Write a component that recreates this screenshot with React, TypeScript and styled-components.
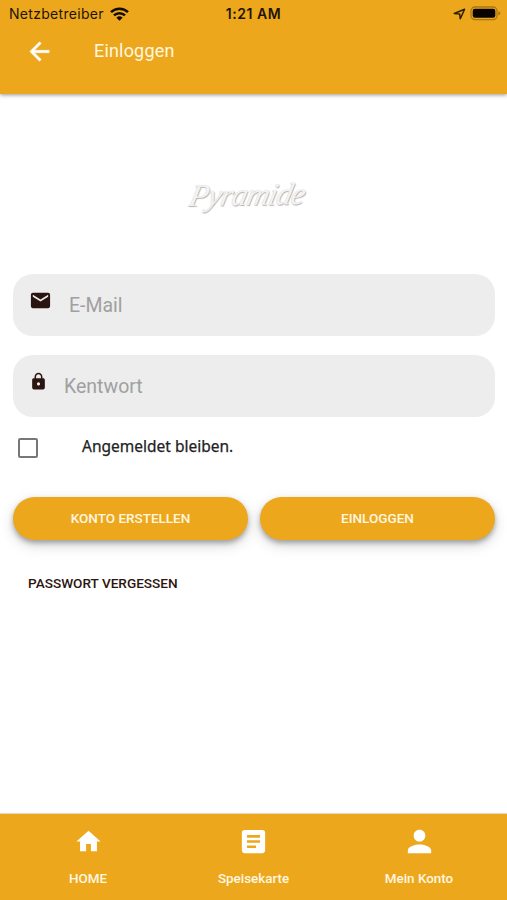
import React from "react";
import styled, { createGlobalStyle } from "styled-components";

const AMBER = "#eda71c";
const BROWN = "#2b1510";

const GlobalStyle = createGlobalStyle`
  *, *::before, *::after { box-sizing: border-box; }
  body { margin: 0; background: #fff; font-family: Roboto, sans-serif; }
  button, input { font: inherit; border: 0; margin: 0; padding: 0; }
`;

const Screen = styled.div`
  display: flex;
  flex-direction: column;
  height: 900px;
  overflow: hidden;
  background: #fff;
`;

const Header = styled.header`
  height: 94px;
  flex: none;
  background: ${AMBER};
  box-shadow: 0 1px 4px rgba(0, 0, 0, 0.42);
`;

const StatusBar = styled.div`
  display: grid;
  grid-template-columns: 1fr auto 1fr;
  align-items: center;
  height: 27px;
  padding: 0 6px 0 9px;
  font-family: Inter, sans-serif;
  font-size: 14px;
  color: #1d1503;
`;

const Carrier = styled.div`
  display: flex;
  align-items: center;
  gap: 6px;
  letter-spacing: 0.3px;
`;

const Clock = styled.div`
  margin-right: 3px;
  font-weight: 600;
  font-size: 14px;
  letter-spacing: 0.55px;
`;

const Indicators = styled.div`
  display: flex;
  align-items: center;
  justify-content: flex-end;
  gap: 4px;
`;

const TitleBar = styled.div`
  display: flex;
  align-items: center;
  height: 48px;
  padding-left: 25px;
`;

const IconButton = styled.button`
  display: flex;
  width: 29px;
  background: none;
  color: #fff;

  path { stroke: currentColor; stroke-width: 0.4; }
`;

const Title = styled.h1`
  margin: -2px 0 0 40px;
  font-size: 18px;
  font-weight: 400;
  letter-spacing: 0.18px;
  color: #fff7e0;
`;

const Content = styled.main`
  flex: 1;
  padding: 0 12px 0 13px;
`;

const Logo = styled.div`
  height: 180px;
  padding-top: 81px;
  text-align: center;
  font-family: "Liberation Serif", serif;
  font-style: italic;
  font-size: 31px;
  line-height: 40px;
  letter-spacing: -0.7px;
  color: #f3f3f3;
  text-shadow: 1px 1px 1px #b0b0b0, 0 0 1px #d0d0d0;

  span {
    display: inline-block;
    transform: translateX(-7px) rotate(-1deg) skewX(-14deg);
  }
`;

const Field = styled.label<{ $gap: number }>`
  display: flex;
  align-items: center;
  gap: ${(p) => p.$gap}px;
  height: 62px;
  margin-bottom: 19px;
  padding-left: 16px;
  border-radius: 20px;
  background: #ededed;
  color: ${BROWN};

  svg { flex: none; margin-top: -9px; }
`;

const Input = styled.input`
  flex: 1;
  min-width: 0;
  background: none;
  outline: 0;
  font-size: 19.5px;
  &::placeholder { color: #a0a0a0; opacity: 1; }
`;

const Remember = styled.label`
  display: flex;
  align-items: center;
  height: 24px;
  margin-top: 1px;
  padding-left: 5px;
  font-family: "Noto Sans", sans-serif;
  font-size: 15.5px;
  font-weight: 400;
  color: #222;
  -webkit-text-stroke: 0.25px #222;
  margin-bottom: 37px;

  span { margin: -5px 0 0 44px; }
`;

const Checkbox = styled.input`
  appearance: none;
  width: 20px;
  height: 20px;
  border: 2px solid #777;
  border-radius: 2px;
`;

const Actions = styled.div`
  display: grid;
  grid-template-columns: 1fr 1fr;
  gap: 12px;
`;

const PillButton = styled.button`
  height: 43px;
  padding-bottom: 2px;
  border-radius: 22px;
  background: ${AMBER};
  color: #fff7e0;
  font-size: 13.5px;
  font-weight: 500;
  box-shadow: 0 3px 5px rgba(0, 0, 0, 0.28), 0 5px 14px rgba(0, 0, 0, 0.17);
`;

const TextButton = styled.button`
  margin: 34px 0 0 15px;
  background: none;
  font-size: 13.6px;
  line-height: 18px;
  font-weight: 500;
  color: ${BROWN};
`;

const TabBar = styled.nav`
  display: grid;
  grid-template-columns: repeat(3, 165.5px);
  justify-content: center;
  height: 86px;
  flex: none;
  background: ${AMBER};
  box-shadow: 0 -1px 1px rgba(160, 130, 70, 0.3);
`;

const Tab = styled.a`
  display: flex;
  flex-direction: column;
  align-items: center;
  padding-top: 9px;
  color: #fff;
`;

const TabIcon = styled.span`
  display: flex;
  align-items: center;
  justify-content: center;
  height: 36px;
`;

const TabLabel = styled.span`
  margin-top: 10px;
  font-size: 13.4px;
  line-height: 19px;
  font-weight: 500;
  color: #fff7e0;
`;

const paths = {
  back: "M20 11H7.83l5.59-5.59L12 4l-8 8 8 8 1.41-1.41L7.83 13H20v-2z",
  mail: "M20 4H4c-1.1 0-1.99.9-1.99 2L2 18c0 1.1.9 2 2 2h16c1.1 0 2-.9 2-2V6c0-1.1-.9-2-2-2zm0 4l-8 5-8-5V6l8 5 8-5v2z",
  lock: "M18 8h-1V6c0-2.76-2.24-5-5-5S7 3.24 7 6v2H6c-1.1 0-2 .9-2 2v10c0 1.1.9 2 2 2h12c1.1 0 2-.9 2-2V10c0-1.1-.9-2-2-2zm-6 9c-1.1 0-2-.9-2-2s.9-2 2-2 2 .9 2 2-.9 2-2 2zm3.1-9H8.9V6c0-1.71 1.39-3.1 3.1-3.1s3.1 1.39 3.1 3.1v2z",
  home: "M10 20v-6h4v6h5v-8h3L12 3 2 12h3v8z",
  menu: "M19 3H5c-1.1 0-2 .9-2 2v14c0 1.1.9 2 2 2h14c1.1 0 2-.9 2-2V5c0-1.1-.9-2-2-2zm-5 14H7v-2h7v2zm3-4H7v-2h10v2zm0-4H7V7h10v2z",
  person: "M12 12c2.21 0 4-1.79 4-4s-1.79-4-4-4-4 1.79-4 4 1.79 4 4 4zm0 2c-2.67 0-8 1.34-8 4v2h16v-2c0-2.66-5.33-4-8-4z",
};

const Icon = ({ name, size }: { name: keyof typeof paths; size: number }) => (
  <svg width={size} height={size} viewBox="0 0 24 24" fill="currentColor" aria-hidden="true">
    <path d={paths[name]} />
  </svg>
);

const Wifi = () => (
  <svg width="19" height="14" viewBox="0 0 19 14" fill="none" stroke="#130d00" strokeWidth="2.5">
    <path d="M1 5.2a12.2 12.2 0 0 1 17 0" />
    <path d="M4 8.4a7.8 7.8 0 0 1 11 0" />
    <path d="M9.5 13.8 6.4 10.7a4.5 4.5 0 0 1 6.2 0z" fill="#130d00" stroke="none" />
  </svg>
);

const LocationArrow = () => (
  <svg width="13" height="12" viewBox="0 0 13 12" fill="none" stroke="#2d1f02" strokeWidth="1.5" strokeLinejoin="round">
    <path d="M1.3 5.5 11.6 1.2 7.3 10.8 6.7 6.1z" />
  </svg>
);

const Battery = () => (
  <svg width="31" height="15" viewBox="0 0 31 15">
    <rect x="1" y="1" width="26" height="12.6" rx="4" fill="none" stroke="#a97715" strokeWidth="1.3" />
    <rect x="2.7" y="2.8" width="22.6" height="9" rx="2.2" fill="#080500" />
    <path d="M28.4 5.2q2 .6 2 2.1t-2 2.1z" fill="#a97715" />
  </svg>
);

const tabs = [
  { label: "HOME", icon: "home", size: 29 },
  { label: "Speisekarte", icon: "menu", size: 31 },
  { label: "Mein Konto", icon: "person", size: 35 },
] as const;

export default function App() {
  return (
    <Screen>
      <GlobalStyle />
      <Header>
        <StatusBar>
          <Carrier>Netzbetreiber <Wifi /></Carrier>
          <Clock>1:21 AM</Clock>
          <Indicators><LocationArrow /><Battery /></Indicators>
        </StatusBar>
        <TitleBar>
          <IconButton aria-label="Zurück"><Icon name="back" size={29} /></IconButton>
          <Title>Einloggen</Title>
        </TitleBar>
      </Header>
      <Content>
        <Logo><span>Pyramide</span></Logo>
        <Field $gap={17}>
          <Icon name="mail" size={23} />
          <Input type="email" placeholder="E-Mail" />
        </Field>
        <Field $gap={16}>
          <Icon name="lock" size={19} />
          <Input type="password" placeholder="Kentwort" />
        </Field>
        <Remember>
          <Checkbox type="checkbox" />
          <span>Angemeldet bleiben.</span>
        </Remember>
        <Actions>
          <PillButton>KONTO ERSTELLEN</PillButton>
          <PillButton>EINLOGGEN</PillButton>
        </Actions>
        <TextButton>PASSWORT VERGESSEN</TextButton>
      </Content>
      <TabBar>
        {tabs.map((t) => (
          <Tab key={t.label}>
            <TabIcon><Icon name={t.icon} size={t.size} /></TabIcon>
            <TabLabel>{t.label}</TabLabel>
          </Tab>
        ))}
      </TabBar>
    </Screen>
  );
}
